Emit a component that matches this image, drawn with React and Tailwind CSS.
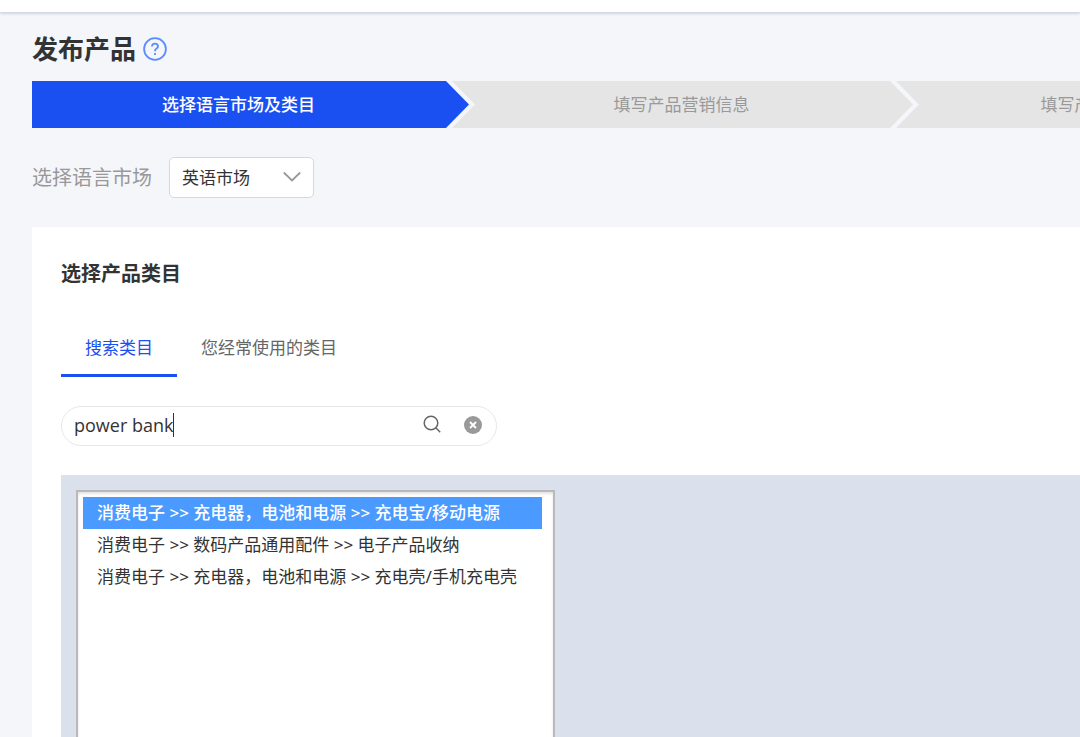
import { useState } from 'react';

const steps = ['选择语言市场及类目', '填写产品营销信息', '填写产品交易物流信息'];

const tabs = ['搜索类目', '您经常使用的类目'];

const categories = [
    '消费电子 >> 充电器，电池和电源 >> 充电宝/移动电源',
    '消费电子 >> 数码产品通用配件 >> 电子产品收纳',
    '消费电子 >> 充电器，电池和电源 >> 充电壳/手机充电壳',
];

const Steps = () => (
    <ol className="flex h-[47px] overflow-hidden text-[17px]">
        {steps.map((step, i) => (
            <li
                key={step}
                className={
                    i === 0
                        ? 'flex w-[437px] shrink-0 items-center justify-center bg-[#1a50f2] pr-6 font-medium text-white [clip-path:polygon(0_0,calc(100%-23px)_0,100%_50%,calc(100%-23px)_100%,0_100%)]'
                        : '-ml-[17px] flex w-[461px] shrink-0 items-center justify-center bg-[#e5e5e5] pr-0.5 text-[#999] [clip-path:polygon(0_0,calc(100%-23px)_0,100%_50%,calc(100%-23px)_100%,0_100%,23px_50%)]'
                }
            >
                {step}
            </li>
        ))}
    </ol>
);

const App = () => {
    const [keyword, setKeyword] = useState('power bank');
    const [tab, setTab] = useState(0);
    const [category, setCategory] = useState(categories[0]);

    return (
        <div className="flex min-h-screen flex-col overflow-hidden bg-[#f5f6fa] font-['Noto_Sans','Noto_Sans_CJK_SC',sans-serif] text-[#333]">
            <header className="h-[13px] border-b border-[#d0daea] bg-white shadow-sm" />

            <main className="flex flex-1 flex-col pl-8">
                <div className="flex h-[68px] items-center gap-[7px] pt-1">
                    <h1 className="text-[26px] leading-8 font-bold">发布产品</h1>
                    <button type="button" aria-label="帮助">
                        <svg className="size-6" viewBox="0 0 24 24" fill="none" stroke="#5c8cff" strokeWidth="1.8">
                            <circle cx="12" cy="12" r="10.9" />
                            <path d="M9 9.6c0-1.9 1.3-3 3-3s3 1.1 3 2.8c0 2-3 2.2-3 4.4v.5" />
                            <path d="M12 16v2" />
                        </svg>
                    </button>
                </div>

                <Steps />

                <div className="mt-[29px] flex items-center gap-[17px]">
                    <label htmlFor="market" className="text-xl text-[#999]">
                        选择语言市场
                    </label>
                    <div className="relative">
                        <select
                            id="market"
                            className="h-[41px] w-[145px] appearance-none rounded-[5px] border border-[#d8d8d8] bg-white pl-3 text-[17px] text-[#333]"
                        >
                            <option>英语市场</option>
                        </select>
                        <svg
                            className="pointer-events-none absolute top-3.5 right-3 h-3 w-5"
                            viewBox="0 0 20 12"
                            fill="none"
                            stroke="#999"
                            strokeWidth="1.8"
                        >
                            <path d="M1.8 1.5 10 9.5l8.2-8" />
                        </svg>
                    </div>
                </div>

                <section className="mt-[29px] flex flex-1 flex-col bg-white pt-[33px] pl-[29px]">
                    <h2 className="text-xl font-bold">选择产品类目</h2>

                    <div className="mt-8 flex text-[17px]" role="tablist">
                        {tabs.map((name, i) => (
                            <button
                                key={name}
                                type="button"
                                role="tab"
                                aria-selected={tab === i}
                                onClick={() => setTab(i)}
                                className={
                                    tab === i
                                        ? 'h-[57px] border-b-3 border-[#1a50f2] px-6 pt-0.5 text-[#1a50f2]'
                                        : 'h-[57px] border-b-3 border-transparent px-6 pt-0.5 text-[#666]'
                                }
                            >
                                {name}
                            </button>
                        ))}
                    </div>

                    <div className="mt-[29px] flex h-10 w-[436px] items-center rounded-full border border-[#e8e8e8] pr-[13px] pb-0.5 pl-3">
                        <input
                            type="text"
                            aria-label="搜索类目"
                            value={keyword}
                            onChange={(e) => setKeyword(e.target.value)}
                            className="field-sizing-content font-['Open_Sans','Noto_Sans_CJK_SC',sans-serif] text-lg caret-transparent outline-none"
                        />
                        <span className="h-6 w-px bg-[#333]" />
                        <button type="button" aria-label="搜索" className="ml-auto">
                            <svg className="size-5" viewBox="0 0 20 20" fill="none" stroke="#666" strokeWidth="1.5">
                                <circle cx="9" cy="8" r="6.8" />
                                <path d="m13.8 12.8 4.4 4.4" />
                            </svg>
                        </button>
                        <button type="button" aria-label="清除" className="ml-[21px]" onClick={() => setKeyword('')}>
                            <svg className="size-5" viewBox="0 0 20 20">
                                <circle cx="10" cy="10" r="9" fill="#999" />
                                <path d="m7 7 6 6M13 7l-6 6" stroke="#fff" strokeWidth="1.9" />
                            </svg>
                        </button>
                    </div>

                    <div className="mt-[29px] flex flex-1 bg-[#dae1ed] pt-[15px] pl-[15px]">
                        <select
                            size={8}
                            aria-label="产品类目"
                            value={category}
                            onChange={(e) => setCategory(e.target.value)}
                            className="w-[479px] overflow-hidden border-2 border-b-0 border-[#b9b9b9] bg-white py-[5px] pr-[11px] pl-[5px] text-[17px] shadow-[inset_0_2px_3px_#e4e4e4] outline-none"
                        >
                            {categories.map((item) => (
                                <option
                                    key={item}
                                    value={item}
                                    className="h-8 px-3.5 pt-0.5 leading-8 checked:bg-linear-to-r checked:from-[#4a9aff] checked:to-[#4a9aff] checked:font-medium checked:[-webkit-text-fill-color:#fff]"
                                >
                                    {item}
                                </option>
                            ))}
                        </select>
                    </div>
                </section>
            </main>
        </div>
    );
};

export default App;
